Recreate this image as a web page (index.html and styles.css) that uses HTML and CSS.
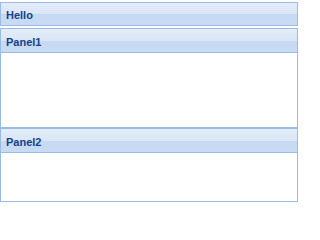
FILE: index.html
```html
<!DOCTYPE html>
<html>
<head>
<meta charset="utf-8">
<link rel="stylesheet" href="styles.css">
</head>
<body>
<div class="wrap">
  <div class="hello"><div class="header">Hello</div></div>
  <div class="panel">
    <div class="header">Panel1</div>
    <div class="body body1"></div>
  </div>
  <div class="panel">
    <div class="header">Panel2</div>
    <div class="body body2"></div>
  </div>
</div>
</body>
</html>
```
FILE: styles.css
```css
html, body {
  margin: 0;
  padding: 0;
  background: #ffffff;
}
.wrap {
  width: 298px;
  padding-top: 2px;
  display: flex;
  flex-direction: column;
}
.header {
  box-sizing: border-box;
  font-family: "Liberation Sans", Arial, sans-serif;
  font-weight: bold;
  font-size: 11px;
  line-height: 13px;
  color: #15428b;
  padding: 6px 3px 3px 5px;
  background: linear-gradient(#e4edf9 0%, #d9e6f6 50%, #c6d9f2 50%, #c9dbf3 100%);
  border: 1px solid #99bbe8;
}
.hello .header {
  height: 24px;
}
.hello {
  margin-bottom: 2px;
}
.panel .header {
  height: 25px;
  padding-top: 7px;
}
.body {
  box-sizing: border-box;
  border: 1px solid #99bbe8;
  border-top: none;
  background: #ffffff;
}
.body1 {
  height: 75px;
}
.body2 {
  height: 49px;
}
```
